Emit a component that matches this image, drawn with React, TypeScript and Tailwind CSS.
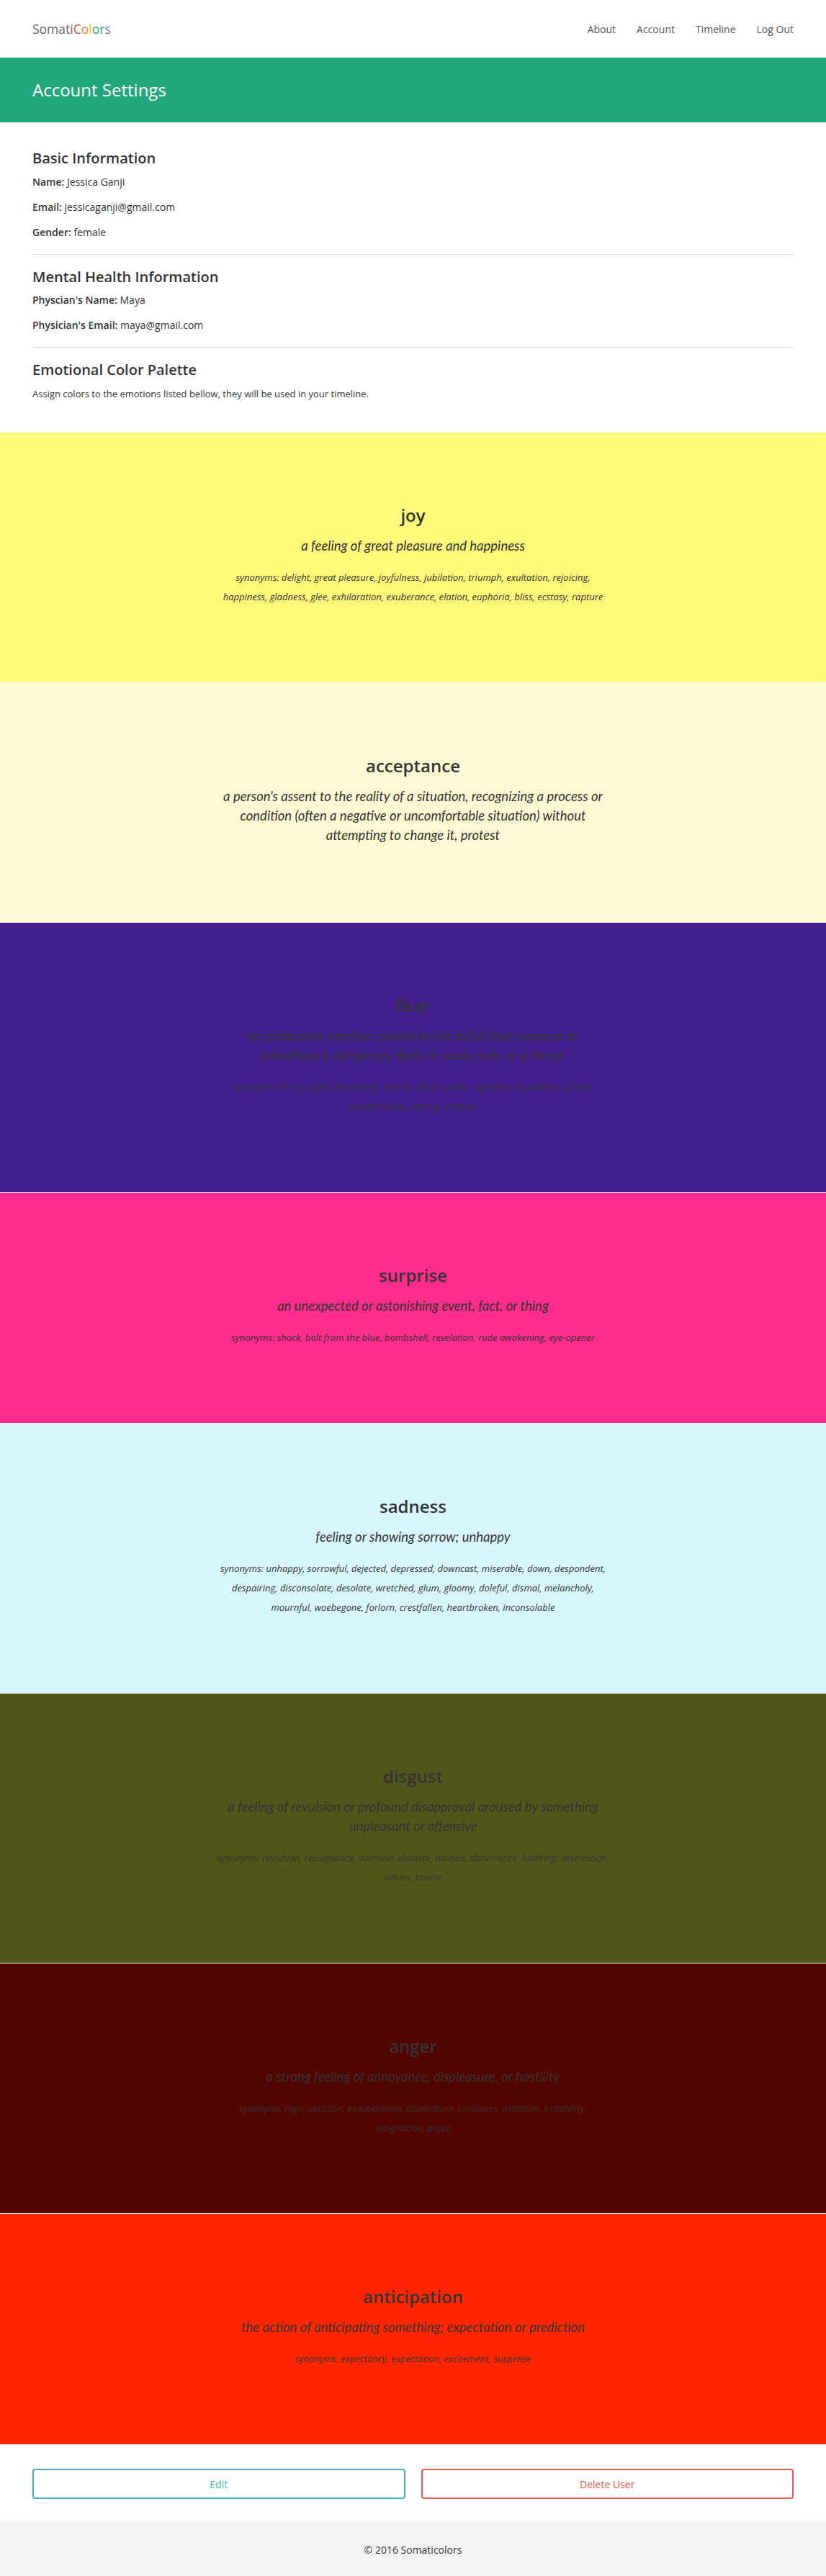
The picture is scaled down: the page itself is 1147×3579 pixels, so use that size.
import React from 'react';

interface Emotion {
  name: string;
  bg: string;
  definition: string[];
  synonyms: string[];
}

const emotions: Emotion[] = [
  {
    name: 'joy',
    bg: 'bg-[#fffa7a]',
    definition: ['a feeling of great pleasure and happiness'],
    synonyms: [
      'synonyms: delight, great pleasure, joyfulness, jubilation, triumph, exultation, rejoicing,',
      'happiness, gladness, glee, exhilaration, exuberance, elation, euphoria, bliss, ecstasy, rapture',
    ],
  },
  {
    name: 'acceptance',
    bg: 'bg-[#fffad4]',
    definition: [
      "a person's assent to the reality of a situation, recognizing a process or",
      'condition (often a negative or uncomfortable situation) without',
      'attempting to change it, protest',
    ],
    synonyms: [],
  },
  {
    name: 'fear',
    bg: 'bg-[#42218f]',
    definition: [
      'an unpleasant emotion caused by the belief that someone or',
      'something is dangerous, likely to cause pain, or a threat',
    ],
    synonyms: [
      'synonyms: terror, fright, fearfulness, horror, alarm, panic, agitation, trepidation, dread,',
      'consternation, dismay, distress',
    ],
  },
  {
    name: 'surprise',
    bg: 'bg-[#ff2d8b]',
    definition: ['an unexpected or astonishing event, fact, or thing'],
    synonyms: ['synonyms: shock, bolt from the blue, bombshell, revelation, rude awakening, eye-opener'],
  },
  {
    name: 'sadness',
    bg: 'bg-[#d8f7fd]',
    definition: ['feeling or showing sorrow; unhappy'],
    synonyms: [
      'synonyms: unhappy, sorrowful, dejected, depressed, downcast, miserable, down, despondent,',
      'despairing, disconsolate, desolate, wretched, glum, gloomy, doleful, dismal, melancholy,',
      'mournful, woebegone, forlorn, crestfallen, heartbroken, inconsolable',
    ],
  },
  {
    name: 'disgust',
    bg: 'bg-[#505519]',
    definition: [
      'a feeling of revulsion or profound disapproval aroused by something',
      'unpleasant or offensive',
    ],
    synonyms: [
      'synonyms: revulsion, repugnance, aversion, distaste, nausea, abhorrence, loathing, detestation,',
      'odium, horror',
    ],
  },
  {
    name: 'anger',
    bg: 'bg-[#520400]',
    definition: ['a strong feeling of annoyance, displeasure, or hostility'],
    synonyms: [
      'synonyms: rage, vexation, exasperation, displeasure, crossness, irritation, irritability,',
      'indignation, pique',
    ],
  },
  {
    name: 'anticipation',
    bg: 'bg-[#ff2600]',
    definition: ['the action of anticipating something; expectation or prediction'],
    synonyms: ['synonyms: expectancy, expectation, excitement, suspense'],
  },
];

const Logo = () => (
  <div className="text-[17.5px] text-[#666]">
    Somati
    <span className="text-[#e74c3c]">C</span>
    <span className="text-[#f0803c]">o</span>
    <span className="text-[#f1c40f]">l</span>
    <span className="text-[#27ae60]">o</span>
    <span className="text-[#16a085]">r</span>
    <span className="text-[#5d7fa3]">s</span>
  </div>
);

const InfoLine = ({ label, value }: { label: string; value: string }) => (
  <p className="text-[14px] leading-[20px] mb-[15px] last:mb-0">
    <span className="font-semibold">{label}</span> {value}
  </p>
);

const EmotionBlock = ({ emotion }: { emotion: Emotion }) => {
  const hasSynonyms = emotion.synonyms.length > 0;
  return (
    <section
      className={`${emotion.bg} border-b border-white pt-[102px] ${
        hasSynonyms ? 'pb-[105px]' : 'pb-[107px]'
      } text-center text-[#333]`}
    >
      <h2 className="text-[24px] leading-[26px] font-semibold">{emotion.name}</h2>
      <p className="mt-[16px] text-[18.5px] leading-[27px] italic font-['Lato',sans-serif]">
        {emotion.definition.map((line) => (
          <span key={line} className="block whitespace-nowrap">
            {line}
          </span>
        ))}
      </p>
      {hasSynonyms && (
        <p className="mt-[17px] text-[13px] leading-[27px] italic">
          {emotion.synonyms.map((line) => (
            <span key={line} className="block whitespace-nowrap">
              {line}
            </span>
          ))}
        </p>
      )}
    </section>
  );
};

export default function App() {
  return (
    <div className="font-['Open_Sans',sans-serif] text-[#333] bg-white">
      <nav className="h-[80px] flex items-center justify-between px-[45px]">
        <Logo />
        <ul className="flex items-center gap-[29px] text-[14px] text-[#555]">
          <li>About</li>
          <li>Account</li>
          <li>Timeline</li>
          <li>Log Out</li>
        </ul>
      </nav>

      <header className="h-[90px] bg-[#22a67b] flex items-center px-[45px]">
        <h1 className="text-[24px] text-white">Account Settings</h1>
      </header>

      <main className="px-[45px] pt-[39px] pb-[44px]">
        <h3 className="text-[20px] leading-[22px] font-semibold mb-[12px]">Basic Information</h3>
        <InfoLine label="Name:" value="Jessica Ganji" />
        <InfoLine label="Email:" value="jessicaganji@gmail.com" />
        <InfoLine label="Gender:" value="female" />

        <hr className="border-t border-[#ddd] my-[20px]" />

        <h3 className="text-[20px] leading-[22px] font-semibold mb-[11px]">Mental Health Information</h3>
        <InfoLine label="Physcian's Name:" value="Maya" />
        <InfoLine label="Physician's Email:" value="maya@gmail.com" />

        <hr className="border-t border-[#ddd] my-[20px]" />

        <h3 className="text-[20px] leading-[22px] font-semibold mb-[12px]">Emotional Color Palette</h3>
        <p className="text-[13px] leading-[20px]">
          Assign colors to the emotions listed bellow, they will be used in your timeline.
        </p>
      </main>

      {emotions.map((emotion) => (
        <EmotionBlock key={emotion.name} emotion={emotion} />
      ))}

      <div className="grid grid-cols-2 gap-[22px] px-[45px] pt-[33px] pb-[30px]">
        <button className="h-[42px] rounded-[4px] border-2 border-[#46adc0] text-[#46adc0] text-[14px]">
          Edit
        </button>
        <button className="h-[42px] rounded-[4px] border-2 border-[#e05a4b] text-[#e05a4b] text-[14px]">
          Delete User
        </button>
      </div>

      <footer className="h-[81px] bg-[#f4f4f4] flex items-center justify-center text-[14px] text-[#333]">
        © 2016 Somaticolors
      </footer>
    </div>
  );
}
